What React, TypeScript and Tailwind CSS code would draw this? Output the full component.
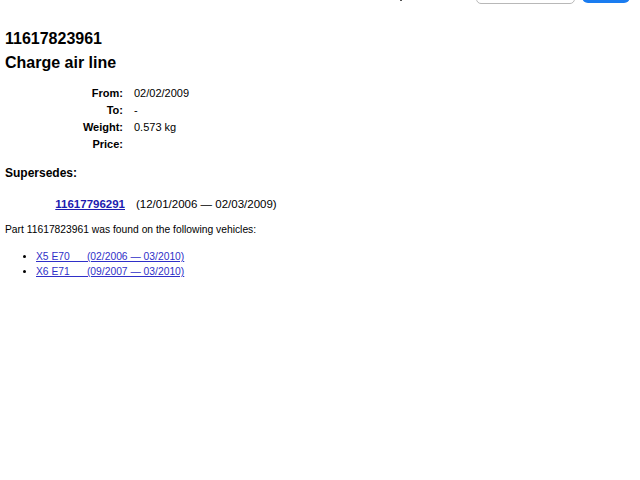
export default function App() {
  const rows = [
    { label: "From:", value: "02/02/2009" },
    { label: "To:", value: "-" },
    { label: "Weight:", value: "0.573 kg" },
    { label: "Price:", value: "" },
  ];
  const vehicles = [
    { name: "X5 E70", range: "(02/2006 \u2014 03/2010)" },
    { name: "X6 E71", range: "(09/2007 \u2014 03/2010)" },
  ];

  return (
    <div
      className="min-h-[480px] w-[640px] bg-white text-black overflow-hidden"
      style={{ fontFamily: '"Liberation Sans", Arial, Helvetica, sans-serif' }}
    >
      {/* top bar, scrolled mostly out of view */}
      <div className="h-[4px] relative">
        <div className="absolute left-[400px] top-[-2px] w-[2px] h-[3px] bg-[#555]" />
        <div className="absolute left-[476px] top-[-24px] w-[99px] h-[28px] rounded-[5px] border border-[#b8b8b8] bg-white" />
        <div className="absolute left-[582px] top-[-25px] w-[48px] h-[28px] rounded-[6px] bg-[#1a7cf0]" />
      </div>

      <div className="px-[5px]">
        <h1 className="mt-[25px] text-[16px] leading-[20px] font-bold">11617823961</h1>
        <h2 className="mt-[4px] text-[16px] leading-[20px] font-bold">Charge air line</h2>

        <div className="mt-[12px] grid grid-cols-[118px_1fr] gap-x-[11px] text-[11px] leading-[17px]">
          {rows.map((r) => (
            <div key={r.label} className="contents">
              <div className="text-right font-bold">{r.label}</div>
              <div className="min-h-[17px]">{r.value}</div>
            </div>
          ))}
        </div>

        <h3 className="mt-[12px] text-[12px] leading-[16px] font-bold">Supersedes:</h3>

        <div className="mt-[15px] grid grid-cols-[120px_1fr] gap-x-[11px] text-[11.5px] leading-[17px]">
          <div className="text-right">
            <a href="#" className="font-bold text-[#1c1cb0] underline">11617796291</a>
          </div>
          <div>(12/01/2006 &mdash; 02/03/2009)</div>
        </div>

        <p className="mt-[10px] text-[10.3px] leading-[14px]">
          Part 11617823961 was found on the following vehicles:
        </p>

        <ul className="mt-[12px] ml-[20px] list-disc pl-[11px] text-[10.3px] leading-[15px]">
          {vehicles.map((v) => (
            <li key={v.name}>
              <a href="#" className="text-[#2f2fc8] underline whitespace-pre">
                {v.name + "      " + v.range}
              </a>
            </li>
          ))}
        </ul>
      </div>
    </div>
  );
}
